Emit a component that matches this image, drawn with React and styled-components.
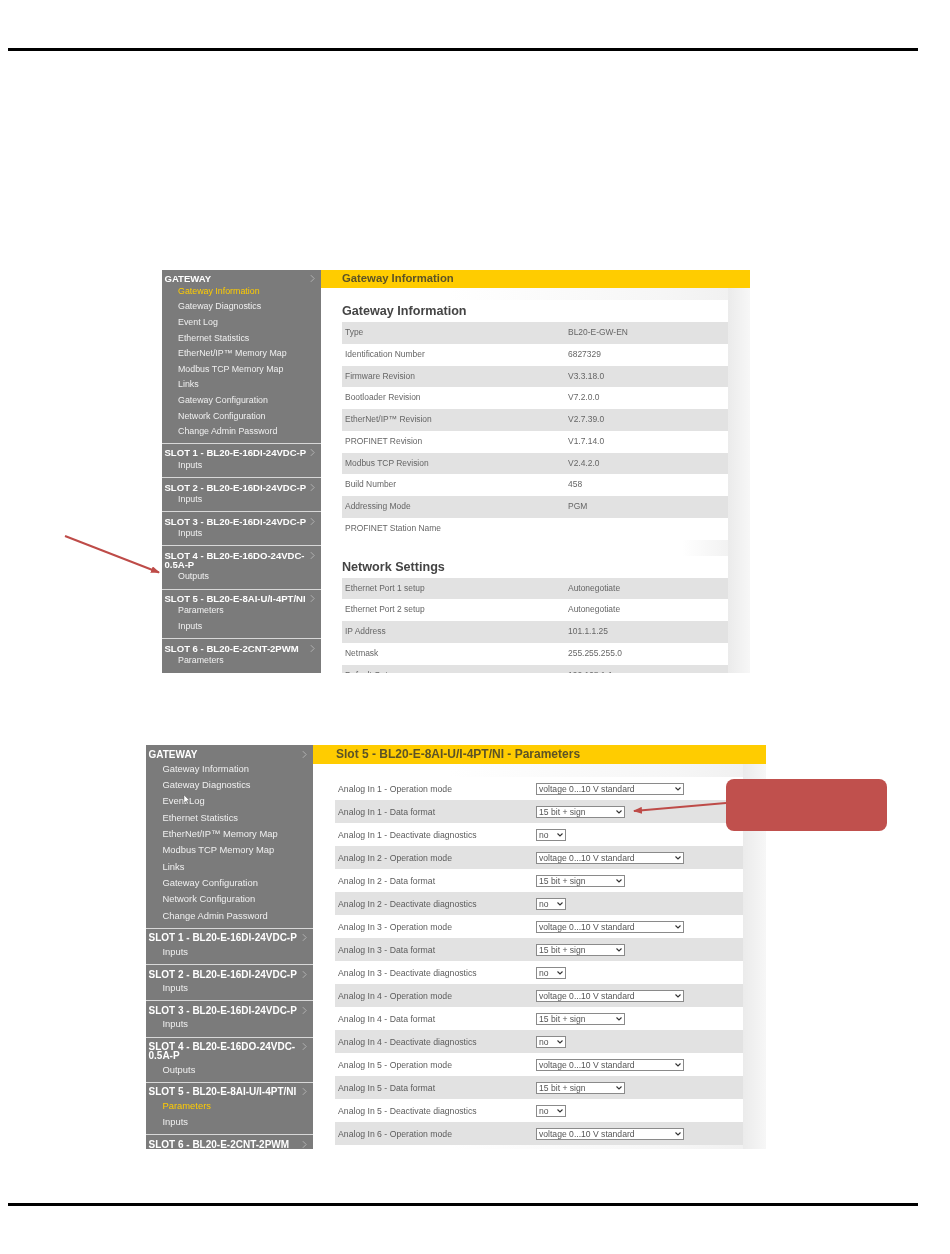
import styled, { createGlobalStyle } from "styled-components";

const GlobalStyle = createGlobalStyle`
	html, body {
		margin: 0;
		padding: 0;
		background: #fff;
	}
`;

const gatewayLinks = [
	"Gateway Information",
	"Gateway Diagnostics",
	"Event Log",
	"Ethernet Statistics",
	"EtherNet/IP™ Memory Map",
	"Modbus TCP Memory Map",
	"Links",
	"Gateway Configuration",
	"Network Configuration",
	"Change Admin Password",
];

const slots = [
	{ title: "SLOT 1 - BL20-E-16DI-24VDC-P", links: ["Inputs"] },
	{ title: "SLOT 2 - BL20-E-16DI-24VDC-P", links: ["Inputs"] },
	{ title: "SLOT 3 - BL20-E-16DI-24VDC-P", links: ["Inputs"] },
	{ title: "SLOT 4 - BL20-E-16DO-24VDC-0.5A-P", links: ["Outputs"] },
	{ title: "SLOT 5 - BL20-E-8AI-U/I-4PT/NI", links: ["Parameters", "Inputs"] },
	{ title: "SLOT 6 - BL20-E-2CNT-2PWM", links: ["Parameters"] },
];

const gatewayInfo = [
	["Type", "BL20-E-GW-EN"],
	["Identification Number", "6827329"],
	["Firmware Revision", "V3.3.18.0"],
	["Bootloader Revision", "V7.2.0.0"],
	["EtherNet/IP™ Revision", "V2.7.39.0"],
	["PROFINET Revision", "V1.7.14.0"],
	["Modbus TCP Revision", "V2.4.2.0"],
	["Build Number", "458"],
	["Addressing Mode", "PGM"],
	["PROFINET Station Name", ""],
];

const networkSettings = [
	["Ethernet Port 1 setup", "Autonegotiate"],
	["Ethernet Port 2 setup", "Autonegotiate"],
	["IP Address", "101.1.1.25"],
	["Netmask", "255.255.255.0"],
	["Default Gateway", "192.168.1.1"],
];

const paramKinds = [
	{ label: "Operation mode", value: "voltage 0...10 V standard", width: 148 },
	{ label: "Data format", value: "15 bit + sign", width: 89 },
	{ label: "Deactivate diagnostics", value: "no", width: 30 },
];

const paramRows = [];
for (let i = 1; i <= 6; i++) {
	paramKinds.forEach((kind) => {
		if (i < 6 || kind.label === "Operation mode") {
			paramRows.push({ ...kind, label: `Analog In ${i} - ${kind.label}` });
		}
	});
}

function Chevron() {
	return (
		<ChevronIcon viewBox="0 0 6 10">
			<path d="M1 1l4 4-4 4" fill="none" stroke="#b0b0b0" strokeWidth="1.2" />
		</ChevronIcon>
	);
}

function Side({ big, active }) {
	return (
		<Sidebar $big={big}>
			<GatewayGroup>
				<NavTitle>
					<span>GATEWAY</span>
					<Chevron />
				</NavTitle>
				{gatewayLinks.map((link) => (
					<NavLink key={link} $active={link === active}>
						{link}
					</NavLink>
				))}
			</GatewayGroup>
			{slots.map((slot) => (
				<SlotGroup key={slot.title}>
					<NavTitle>
						<span>{slot.title}</span>
						<Chevron />
					</NavTitle>
					{slot.links.map((link) => (
						<NavLink
							key={link}
							$active={slot.title.startsWith("SLOT 5") && link === active}
						>
							{link}
						</NavLink>
					))}
				</SlotGroup>
			))}
		</Sidebar>
	);
}

function InfoTable({ rows }) {
	return rows.map(([name, value], i) => (
		<InfoRow key={name} $odd={i % 2 === 0}>
			<span>{name}</span>
			<span>{value}</span>
		</InfoRow>
	));
}

function App() {
	return (
		<Page>
			<GlobalStyle />
			<Rule />

			<FirstShot>
				<Side active="Gateway Information" />
				<Main>
					<TitleBar>Gateway Information</TitleBar>
					<InfoPanel>
						<Heading>Gateway Information</Heading>
						<InfoTable rows={gatewayInfo} />
						<Fade />
						<Heading>Network Settings</Heading>
						<InfoTable rows={networkSettings} />
					</InfoPanel>
				</Main>
			</FirstShot>

			<SecondShot>
				<Side big active="Parameters" />
				<Main>
					<TitleBar $big>Slot 5 - BL20-E-8AI-U/I-4PT/NI - Parameters</TitleBar>
					<ParamPanel>
						{paramRows.map((row, i) => (
							<ParamRow key={row.label} $odd={i % 2 === 1}>
								<span>{row.label}</span>
								<SelectWrap $width={row.width}>
									<ParamSelect defaultValue={row.value}>
										<option>{row.value}</option>
									</ParamSelect>
									<SelectArrow viewBox="0 0 6 4">
										<path d="M.5.500L3 3l2.500-2.500" fill="none" stroke="#333" strokeWidth="1.100" />
									</SelectArrow>
								</SelectWrap>
							</ParamRow>
						))}
					</ParamPanel>
				</Main>
				<Cursor viewBox="0 0 7 10">
					<path d="M1 0v8l2-2 1.500 3 1-.5L4 5.500h2.500z" fill="#fff" stroke="#555" strokeWidth=".4" />
				</Cursor>
			</SecondShot>

			<Rule $bottom />

			<Callout />
			<Arrows viewBox="0 0 950 1254">
				<defs>
					<marker id="head" markerUnits="userSpaceOnUse" markerWidth="9" markerHeight="7" refX="8" refY="3.500" orient="auto">
						<path d="M0 0l9 3.500-9 3.500z" fill="#be4b48" />
					</marker>
				</defs>
				<line x1="65" y1="536" x2="159" y2="572.500" stroke="#be4b48" strokeWidth="2" markerEnd="url(#head)" />
				<line x1="726" y1="803" x2="634" y2="811" stroke="#be4b48" strokeWidth="2" markerEnd="url(#head)" />
			</Arrows>
		</Page>
	);
}

const Page = styled.div`
	position: relative;
	width: 950px;
	height: 1254px;
	padding-top: 48px;
	box-sizing: border-box;
	overflow: hidden;
	font-family: "Liberation Sans", Arial, sans-serif;
`;

const Rule = styled.div`
	width: 910px;
	height: 3px;
	margin-left: 8px;
	margin-top: ${(p) => (p.$bottom ? "54px" : "0")};
	background: #000;
`;

const Shot = styled.div`
	position: relative;
	display: flex;
	overflow: hidden;
	filter: blur(0.35px);
`;

const FirstShot = styled(Shot)`
	width: 588px;
	height: 403px;
	margin: 219px 0 0 162px;
`;

const SecondShot = styled(Shot)`
	width: 620px;
	height: 404px;
	margin: 72px 0 0 146px;
`;

const Sidebar = styled.nav`
	--item: ${(p) => (p.$big ? "16.3px" : "15.6px")};
	--first-top: ${(p) => (p.$big ? "4.5px" : "3.5px")};
	--first-gap: ${(p) => (p.$big ? "2.35px" : "1.4px")};
	--first-bottom: ${(p) => (p.$big ? "4.15px" : "3.1px")};
	--slot-gap: ${(p) => (p.$big ? "1.35px" : "0.2px")};
	--slot-bottom: ${(p) => (p.$big ? "4.1px" : "3.9px")};
	--title-size: ${(p) => (p.$big ? "10px" : "9.550px")};
	--title-width: ${(p) => (p.$big ? "150px" : "143px")};
	--link-size: ${(p) => (p.$big ? "9.4px" : "8.850px")};
	--link-indent: ${(p) => (p.$big ? "14px" : "13.500px")};
	flex: 0 0 ${(p) => (p.$big ? "167px" : "159px")};
	background: #7b7b7b;
`;

const GatewayGroup = styled.div`
	--gap: var(--first-gap);
	padding: var(--first-top) 0 var(--first-bottom) 2.500px;
`;

const SlotGroup = styled.div`
	--gap: var(--slot-gap);
	padding: 4.500px 0 var(--slot-bottom) 2.500px;
	border-top: 1px solid #d8d8d8;
`;

const NavTitle = styled.div`
	display: flex;
	justify-content: space-between;
	align-items: flex-start;
	padding-right: 6px;
	margin-bottom: var(--gap);
	color: #fff;
	font-size: var(--title-size);
	font-weight: 700;
	line-height: 9px;

	span {
		width: var(--title-width);
	}
`;

const ChevronIcon = styled.svg`
	flex: none;
	width: 5px;
	height: 9px;
`;

const NavLink = styled.div`
	height: var(--item);
	padding-left: var(--link-indent);
	color: ${(p) => (p.$active ? "#fc0" : "#f0f0f0")};
	font-size: var(--link-size);
	line-height: var(--item);
`;

const Main = styled.div`
	flex: 1;
	min-width: 0;
	background: linear-gradient(
		90deg,
		#fff 30%,
		#f6f6f6 80%,
		#f1f1f1 94.800%,
		#ebebeb 95%,
		#f7f7f7 100%
	);
`;

const TitleBar = styled.div`
	height: ${(p) => (p.$big ? "19px" : "18px")};
	padding-left: ${(p) => (p.$big ? "23px" : "21px")};
	background: #fc0;
	color: #5c5326;
	font-size: ${(p) => (p.$big ? "12px" : "11.300px")};
	font-weight: 700;
	line-height: ${(p) => (p.$big ? "18px" : "17px")};
`;

const InfoPanel = styled.div`
	width: 386px;
	margin: 12px 0 0 21px;
	background: #fff;
`;

const Heading = styled.h2`
	margin: 0;
	height: 22px;
	color: #444;
	font-size: 12.600px;
	font-weight: 700;
	line-height: 22px;
`;

const Fade = styled.div`
	height: 16px;
	background: linear-gradient(90deg, #fff 88%, #f2f2f2 100%);
`;

const InfoRow = styled.div`
	display: grid;
	grid-template-columns: 223px 1fr;
	height: 21.750px;
	padding-left: 3px;
	background: ${(p) => (p.$odd ? "#e2e2e2" : "#fff")};
	color: #666;
	font-size: 8.450px;
	line-height: 21.750px;
`;

const ParamPanel = styled.div`
	width: 408px;
	margin: 13px 0 0 22px;
	background: #fff;
`;

const ParamRow = styled.div`
	display: grid;
	grid-template-columns: 198px 1fr;
	align-items: center;
	height: 23px;
	padding-left: 3px;
	background: ${(p) => (p.$odd ? "#e2e2e2" : "#fff")};
	color: #5c5c5c;
	font-size: 8.700px;
`;

const SelectWrap = styled.div`
	position: relative;
	width: ${(p) => p.$width}px;
	height: 12px;
`;

const ParamSelect = styled.select`
	display: block;
	width: 100%;
	height: 100%;
	margin: 0;
	padding: 0 0 0 2px;
	box-sizing: border-box;
	appearance: none;
	background: #fff;
	border: 1px solid #8a8a8a;
	border-radius: 0;
	color: #555;
	font-family: inherit;
	font-size: 8.600px;
	line-height: 10px;
`;

const SelectArrow = styled.svg`
	position: absolute;
	right: 3px;
	top: 4px;
	width: 6px;
	height: 4px;
`;

const Cursor = styled.svg`
	position: absolute;
	left: 37px;
	top: 50px;
	width: 7px;
	height: 10px;
`;

const Callout = styled.div`
	position: absolute;
	left: 726px;
	top: 779px;
	width: 161px;
	height: 52px;
	background: #c0504d;
	border-radius: 8px;
`;

const Arrows = styled.svg`
	position: absolute;
	left: 0;
	top: 0;
	width: 950px;
	height: 1254px;
	pointer-events: none;
`;

export default App;
